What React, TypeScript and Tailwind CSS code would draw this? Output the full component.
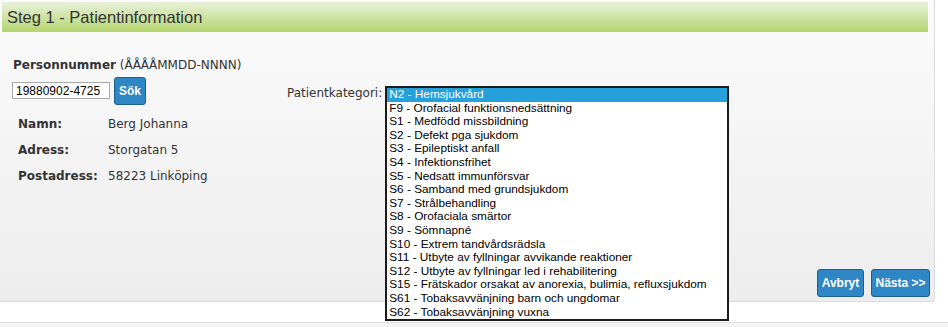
import React from 'react'

const categories = [
  'N2 - Hemsjukvård',
  'F9 - Orofacial funktionsnedsättning',
  'S1 - Medfödd missbildning',
  'S2 - Defekt pga sjukdom',
  'S3 - Epileptiskt anfall',
  'S4 - Infektionsfrihet',
  'S5 - Nedsatt immunförsvar',
  'S6 - Samband med grundsjukdom',
  'S7 - Strålbehandling',
  'S8 - Orofaciala smärtor',
  'S9 - Sömnapné',
  'S10 - Extrem tandvårdsrädsla',
  'S11 - Utbyte av fyllningar avvikande reaktioner',
  'S12 - Utbyte av fyllningar led i rehabilitering',
  'S15 - Frätskador orsakat av anorexia, bulimia, refluxsjukdom',
  'S61 - Tobaksavvänjning barn och ungdomar',
  'S62 - Tobaksavvänjning vuxna',
]

const patient = [
  { label: 'Namn:', value: 'Berg Johanna' },
  { label: 'Adress:', value: 'Storgatan 5' },
  { label: 'Postadress:', value: '58223 Linköping' },
]

const btn =
  "h-[28px] rounded-[3px] border border-[#1c5f91] bg-[#2e86c5] px-0 text-[12px] font-bold text-white whitespace-nowrap font-['Liberation_Sans',Arial,sans-serif]"

export default function App() {
  return (
    <div className="w-[948px] h-[327px] bg-white relative overflow-hidden font-['DejaVu_Sans',Verdana,sans-serif] text-[12px] text-[#333]">
      <div className="flex flex-col w-[935px] h-[302px] pt-[2px] pl-[2px] border-r border-b border-[#dcdcdc] rounded-br-[4px] bg-gradient-to-b from-[#fbfbfb] to-[#ededed]">
        <div className="w-[926px] h-[30px] flex items-center pl-[5px] bg-gradient-to-b from-[#e9f2da] to-[#b3d46b] text-[16.5px] text-[#333] font-['Liberation_Sans',Arial,sans-serif]">
          Steg 1 - Patientinformation
        </div>

        <div className="mt-[25px] ml-[11px] leading-[16px]">
          <span className="font-bold">Personnummer</span> (ÅÅÅÅMMDD-NNNN)
        </div>

        <div className="mt-[4px] flex items-start">
          <input
            readOnly
            value="19880902-4725"
            className="mt-[5px] ml-[10px] w-[98px] h-[17px] border border-[#a9a9a9] bg-white px-[3px] text-[12px] text-black outline-none font-['Liberation_Sans',Arial,sans-serif]"
          />
          <button className={`${btn} ml-[4px] w-[32px]`}>Sök</button>

          <div className="ml-[141px] mt-[8px] leading-[16px]">Patientkategori:</div>
          <div className="relative ml-[3px] mt-[9px]">
            <div className="absolute left-0 top-0 w-[344px] border-2 border-[#1b1b1b] bg-white font-['Liberation_Sans',Arial,sans-serif] text-[11.8px] text-black z-10">
              {categories.map((c, i) => (
                <div
                  key={c}
                  className={`pl-[2px] h-[13.6px] leading-[13.6px] whitespace-nowrap ${
                    i === 0 ? 'bg-[#26a0da] text-white' : ''
                  }`}
                >
                  {c}
                </div>
              ))}
            </div>
          </div>
        </div>

        <div className="mt-[6px] ml-[16px] grid grid-cols-[90px_auto]">
          {patient.map((p) => (
            <React.Fragment key={p.label}>
              <div className="h-[26px] leading-[26px] font-bold">{p.label}</div>
              <div className="h-[26px] leading-[26px]">{p.value}</div>
            </React.Fragment>
          ))}
        </div>

        <div className="flex-1" />
        <div className="flex justify-end gap-[7px] pr-[4px] pb-[4px]">
          <button className={`${btn} w-[47px]`}>Avbryt</button>
          <button className={`${btn} w-[59px]`}>Nästa &gt;&gt;</button>
        </div>
      </div>
      <div className="mt-[20px] h-[5px] border-t border-[#dedede] bg-[#f4f4f4]" />
    </div>
  )
}
